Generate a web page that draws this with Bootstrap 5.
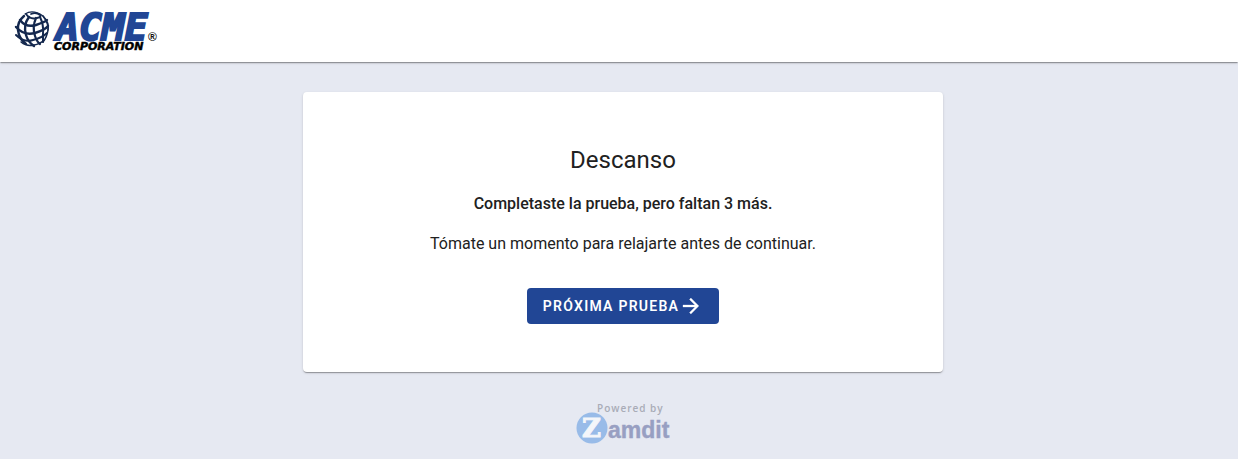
<!DOCTYPE html>
<html lang="es">
<head>
<meta charset="utf-8">
<meta name="viewport" content="width=device-width, initial-scale=1">
<title>Descanso</title>
<link href="https://cdn.jsdelivr.net/npm/bootstrap@5.3.0/dist/css/bootstrap.min.css" rel="stylesheet">
<style>
  :root { --brand: #214695; --elevation: 0 2px 1px -1px rgba(0,0,0,.2), 0 1px 1px rgba(0,0,0,.14), 0 1px 3px rgba(0,0,0,.12); }
  body { background: #e6e9f2; font-family: Roboto, sans-serif; color: #212121; }
  .app-header { padding: 8px 12px; box-shadow: var(--elevation); }
  .brand-logo { display: block; width: 148px; height: 46px; overflow: visible; }
  .app-main { padding: 30px 8px 12px 16px; }
  .rest-card { max-width: 640px; padding: 48px 16px; border-radius: 4px; box-shadow: var(--elevation); }
  .rest-title { font-size: 24px; line-height: 40px; margin-bottom: 12px; font-weight: 400; }
  .rest-text { font-size: 16px; line-height: 24px; margin-bottom: 16px; }
  .rest-status { font-weight: 500; }
  .btn-next { --bs-btn-color: #fff; --bs-btn-bg: var(--brand); --bs-btn-border-width: 0; --bs-btn-hover-color: #fff; --bs-btn-hover-bg: #1a3979; --bs-btn-active-bg: #1a3979; --bs-btn-active-color: #fff;
    height: 36px; padding: 0 16px; margin-top: 16px; border-radius: 4px; font-size: 14px; font-weight: 600; letter-spacing: .09em; }
  .powered { display: block; width: 96px; height: 44px; margin-top: 30px; }
</style>
</head>
<body>
<header class="app-header bg-white">
  <svg class="brand-logo" viewBox="0 0 148 46" role="img" aria-label="ACME Corporation">
    <g fill="none" stroke="#14284e" stroke-width="2" stroke-linecap="round">
      <path d="M13 6Q21 1 31 8Q38 15 36 22" stroke-width="1.2"/>
      <path d="M12 8Q5 14 6 22Q7 31 14 36" stroke-width="2.4"/>
      <path d="M17 9Q11 17 14 27Q16 34 22 38" stroke-width="2.4"/>
      <path d="M24 10Q20 19 23 28Q25 34 28 36" stroke-width="2.2"/>
      <path d="M28 9Q32 17 31 26Q31 31 31 34"/>
      <path d="M31 8Q37 16 36 22Q35 29 31 34" stroke-width="1.6"/>
      <path d="M14 6Q18 12 25 10Q30 9 28 7Q24 4 19 6" stroke-width="1.8"/>
      <path d="M8 12Q14 20 24 17Q33 14 35 12" stroke-width="2.4"/>
      <path d="M4 19Q12 28 23 25Q33 22 36 18" stroke-width="2.4"/>
      <path d="M4 27Q12 35 21 32Q30 30 35 25"/>
      <path d="M9 34Q15 39 22 37Q28 36 32 32" stroke-width="1.4"/>
    </g>
    <text x="44" y="32" font-family="'DejaVu Sans Mono',monospace" font-size="38" font-weight="700" font-style="italic" fill="#214695" stroke="#214695" stroke-width="2">ACME</text>
    <text x="42" y="42" font-family="'DejaVu Sans',sans-serif" font-size="11" font-weight="700" font-style="italic" fill="#000" stroke="#000" stroke-width=".5">CORPORATION</text>
    <text x="136" y="33" font-family="'Liberation Sans',sans-serif" font-size="12" font-weight="700" fill="#111">®</text>
  </svg>
</header>
<main class="app-main d-flex flex-column align-items-center">
  <section class="rest-card card border-0 w-100 d-flex flex-column align-items-center text-center">
    <h1 class="rest-title">Descanso</h1>
    <p class="rest-text rest-status">Completaste la prueba, pero faltan 3 más.</p>
    <p class="rest-text">Tómate un momento para relajarte antes de continuar.</p>
    <button type="button" class="btn btn-next d-inline-flex align-items-center">PRÓXIMA PRUEBA<svg width="24" height="24" viewBox="0 0 24 24" fill="#fff" stroke="#fff" stroke-width=".3" aria-hidden="true"><path d="M4 11v2h12l-5.500 5.500 1.420 1.420L19.840 12l-7.920-7.920L10.500 5.500 16 11H4z"/></svg></button>
  </section>
  <svg class="powered" viewBox="0 0 96 44" role="img" aria-label="Powered by Zamdit">
    <circle cx="17" cy="26" r="15.500" fill="#98bbe8"/>
    <text x="22" y="10" font-family="'Open Sans',sans-serif" font-size="10" font-weight="600" letter-spacing="1" fill="#a9acb7">Powered by</text>
    <text x="7" y="35" font-family="'DejaVu Serif',serif" font-size="26" font-weight="700" fill="#f4f6fa" stroke="#f4f6fa" stroke-width="1">Z</text>
    <text x="33" y="36" font-family="'Liberation Sans',sans-serif" font-size="23" font-weight="700" fill="#989fc2" stroke="#989fc2" stroke-width=".4">amdit</text>
  </svg>
</main>
<script src="https://cdn.jsdelivr.net/npm/bootstrap@5.3.0/dist/js/bootstrap.bundle.min.js"></script>
</body>
</html>
